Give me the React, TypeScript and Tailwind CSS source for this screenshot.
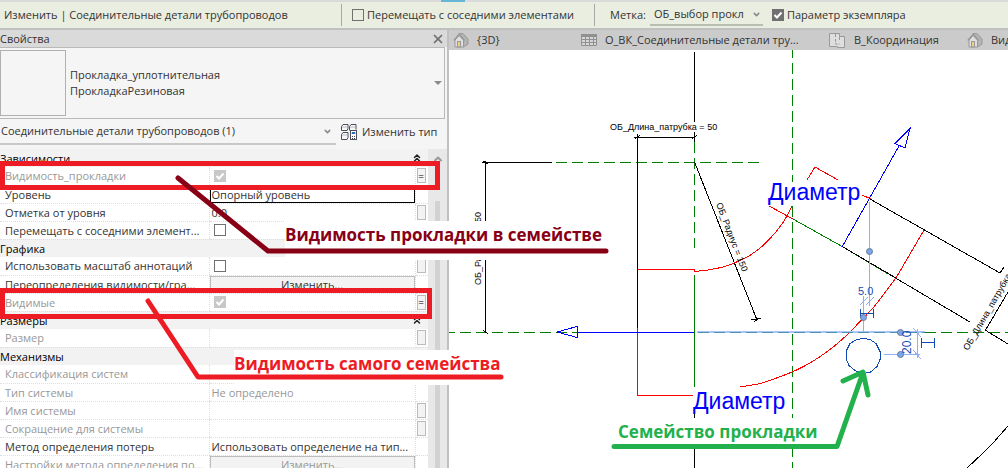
import React from 'react';
import { X, ChevronDown, ChevronUp, ChevronsUp } from 'lucide-react';

interface Row {
  label: string;
  kind?: 'header' | 'check' | 'text' | 'field' | 'button' | 'empty';
  value?: string;
  checked?: boolean;
  muted?: boolean;
  link?: string;
}

const rows: Row[] = [
  { label: 'Зависимости', kind: 'header' },
  { label: 'Видимость_прокладки', kind: 'check', checked: true, muted: true, link: '=' },
  { label: 'Уровень', kind: 'field', value: 'Опорный уровень' },
  { label: 'Отметка от уровня', kind: 'text', value: '0.0', link: '' },
  { label: 'Перемещать с соседними элемент...', kind: 'check', link: '' },
  { label: 'Графика', kind: 'header' },
  { label: 'Использовать масштаб аннотаций', kind: 'check', link: '' },
  { label: 'Переопределения видимости/гра...', kind: 'button', value: 'Изменить...' },
  { label: 'Видимые', kind: 'check', checked: true, muted: true, link: '=' },
  { label: 'Размеры', kind: 'header' },
  { label: 'Размер', kind: 'empty', muted: true, link: '' },
  { label: 'Механизмы', kind: 'header' },
  { label: 'Классификация систем', kind: 'empty', muted: true },
  { label: 'Тип системы', kind: 'text', value: 'Не определено', muted: true },
  { label: 'Имя системы', kind: 'empty', muted: true, link: '' },
  { label: 'Сокращение для системы', kind: 'empty', muted: true, link: '' },
  { label: 'Метод определения потерь', kind: 'text', value: 'Использовать определение на тип...' },
  { label: 'Настройки метода определения по...', kind: 'button', value: 'Изменить...', muted: true },
];

function HomeIcon() {
  return (
    <svg width="16" height="16" viewBox="0 0 16 16" fill="none" className="shrink-0">
      <path d="M6 1.500h4L15 7v5l-4.500 3V7.500z" fill="#b4b4b4" stroke="#999" />
      <path d="M2 8v7h8.500V8L6.200 3.500z" fill="#dedede" stroke="#999" />
      <path d="M.8 8.600 6.200 2.500l5.300 6.100" stroke="#999" strokeWidth="1.500" />
      <rect x="4.500" y="9.500" width="3" height="5.500" fill="#f0cd85" stroke="#999" />
    </svg>
  );
}

function ScheduleIcon() {
  return (
    <svg width="16" height="16" viewBox="0 0 16 16" className="shrink-0">
      <path d="M.5 2.500h15v11H.5z" fill="#d6d6d6" stroke="#909090" />
      <path d="M0 2h16v3H0z" fill="#909090" />
      <path d="M0 7.500h16M0 10.500h16M4.500 5v9M8.500 5v9M12.500 5v9" stroke="#909090" />
    </svg>
  );
}

function SheetIcon() {
  return (
    <svg width="17" height="17" viewBox="0 0 17 17" fill="#dedede" stroke="#999" className="shrink-0">
      <path d="M.5 1.500h10v3h5v11h-7v-1h-8z" />
      <path d="M6.500 2v3M6.500 7v5h4M10.500 5v3" fill="none" strokeDasharray="3 1" />
    </svg>
  );
}

function EditTypeIcon() {
  return (
    <svg width="16" height="16" viewBox="0 0 16 16" fill="none" stroke="#4a4f5a" className="shrink-0">
      <path d="M.5 2.500 2 .5h5v4l-1 2H.5zM8.500 2.500l1.500-2h5v5M8.500 2.500v4M.5 10.500l1.500-2h5v5l-1 2H.5z" fill="#f8f8f8" />
      <path d="M1 3h5M9 3h5M1 11h5" stroke="#b9bcc2" />
      <rect x="9.500" y="6.500" width="6" height="9" fill="#fff" />
      <path d="M11 8.500h3v1h-3z" fill="#2f80d0" stroke="#2f6fb0" />
      <path d="M11 12.500h1m1 0h1M11 14.500h1m1 0h1" />
    </svg>
  );
}

function Check({ id, checked = false, muted = false, label }: { id?: string; checked?: boolean; muted?: boolean; label?: string }) {
  return (
    <span className="inline-grid size-3 shrink-0 place-items-center">
      <input
        id={id}
        type="checkbox"
        aria-label={label}
        defaultChecked={checked}
        disabled={muted}
        className="col-start-1 row-start-1 size-3 appearance-none border border-[#707070] bg-transparent checked:bg-[#707070] disabled:border-[#c8c8c8] disabled:bg-[#c8c8c8]"
      />
      {checked && (
        <svg viewBox="0 0 12 12" className="pointer-events-none z-10 col-start-1 row-start-1 size-3" fill="none" stroke="#fff" strokeWidth="2">
          <path d="M2.500 6 5 8.500 9.500 3.500" />
        </svg>
      )}
    </span>
  );
}

function OptionsBar() {
  return (
    <div className="flex h-[28px] shrink-0 items-center border-b-2 border-[#c0c0c0] bg-[#e9eee1] whitespace-nowrap">
      <span className="w-[341px] shrink-0 pl-1">Изменить | Соединительные детали трубопроводов</span>
      <div className="flex h-[22px] w-[254px] shrink-0 items-center gap-[3px] border-x border-[#a8a8a8] pl-[10px]">
        <Check id="move-near" />
        <label htmlFor="move-near">Перемещать с соседними элементами</label>
      </div>
      <label htmlFor="tag" className="w-[55px] shrink-0 pl-[15px]">Метка:</label>
      <div className="flex w-[113px] shrink-0 items-center border-b-2 border-[#b9beb3]">
        <select id="tag" className="h-5 w-[102px] appearance-none bg-transparent pl-1">
          <option>ОБ_выбор прокл</option>
        </select>
        <ChevronDown className="size-[9px] text-[#888]" strokeWidth={4} />
      </div>
      <div className="flex items-center gap-[3px] pl-[9px]">
        <Check id="instance" checked />
        <label htmlFor="instance">Параметр экземпляра</label>
      </div>
    </div>
  );
}

function ValueCell({ row }: { row: Row }) {
  switch (row.kind) {
    case 'check':
      return <div className="flex pl-1"><Check checked={row.checked} muted={row.muted} label={row.label} /></div>;
    case 'field':
      return <input aria-label={row.label} defaultValue={row.value} className="block h-[17px] w-full border border-black bg-white pl-px" />;
    case 'button':
      return <button type="button" className="block h-4 w-full border border-[#bdbdbd] bg-[#f3f3f3] leading-4">{row.value}</button>;
    default:
      return <div className="pl-[2px] whitespace-nowrap">{row.value}</div>;
  }
}

function PropertiesPanel() {
  return (
    <aside className="flex w-[449px] shrink-0 flex-col border-r-2 border-[#c0c0c0] bg-[#f5f5f5]">
      <div className="flex h-[17px] shrink-0 items-center justify-between bg-[#dadada] pr-[2px]">
        <h2>Свойства</h2>
        <button type="button" aria-label="Закрыть"><X className="size-[14px] text-[#707070]" strokeWidth={3} /></button>
      </div>

      {/* Type selector */}
      <div className="mr-[2px] flex h-[72px] shrink-0 items-center border border-l-0 border-[#b9b9b9]">
        <div className="size-[66px] shrink-0 border border-[#b0b0b0]" />
        <div className="flex-1 pl-1 leading-4">
          <p>Прокладка_уплотнительная</p>
          <p>ПрокладкаРезиновая</p>
        </div>
        <svg width="8" height="4" className="mr-[2px]"><path d="M0 0h8L4 4z" fill="#8a8a8a" /></svg>
      </div>

      <div className="flex h-[30px] shrink-0 items-start">
        <div className="flex h-[26px] w-[336px] items-center border-b-2 border-[#c8c8c8] pl-px">
          <select aria-label="Категория" className="flex-1 appearance-none bg-transparent">
            <option>Соединительные детали трубопроводов (1)</option>
          </select>
          <ChevronDown className="mr-1 size-[9px] text-[#888]" strokeWidth={4} />
        </div>
        <button type="button" className="flex h-[26px] items-center gap-[5px] pl-[5px]">
          <EditTypeIcon />
          Изменить тип
        </button>
      </div>

      <div className="flex min-h-0 flex-1 overflow-hidden">
        <table className="h-[324px] w-[428px] shrink-0 table-fixed border-collapse bg-white leading-[17px]">
          <colgroup>
            <col className="w-[209px]" />
            <col className="w-[206px]" />
            <col className="w-[13px]" />
          </colgroup>
          <tbody>
            {rows.map((row) =>
              row.kind === 'header' ? (
                <tr key={row.label} className="h-[18px] bg-[#f2f2f2]">
                  <th colSpan={2} className="p-0 text-left font-normal text-black">{row.label}</th>
                  <td className="p-0"><ChevronsUp className="-ml-1 size-3 text-[#222]" strokeWidth={3} /></td>
                </tr>
              ) : (
                <tr key={row.label} className={row.muted ? 'h-[18px] text-[#989898]' : 'h-[18px]'}>
                  <th className="border-b border-dotted border-[#dedede] py-0 pr-0 pl-[5px] text-left font-normal whitespace-nowrap">
                    {row.label}
                  </th>
                  <td className="border-x border-b border-dotted border-[#dedede] p-0">
                    <ValueCell row={row} />
                  </td>
                  <td className="border-b border-dotted border-[#dedede] p-0 pl-px">
                    {row.link !== undefined && (
                      <button type="button" aria-label="Связать параметр" className="block h-[15px] w-[9px] border border-[#bbb] bg-[#f3f3f3] text-[10px] leading-3 text-black">
                        {row.link}
                      </button>
                    )}
                  </td>
                </tr>
              ),
            )}
          </tbody>
        </table>
        <div className="flex flex-1 flex-col items-center bg-[#e8e8e8]">
          <ChevronUp className="mt-1 size-3 text-[#999]" strokeWidth={4} />
          <div className="mt-9 w-[5px] flex-1 bg-[#d2d2d2]" />
        </div>
      </div>
    </aside>
  );
}

function ViewTabs() {
  return (
    <nav className="flex h-5 shrink-0 items-center overflow-hidden bg-[#cbcbcb] whitespace-nowrap">
      <a href="#3d" className="flex w-[128px] shrink-0 items-center gap-2 pl-1"><HomeIcon />{'{3D}'}</a>
      <a href="#schedule" className="flex w-[248px] shrink-0 items-center gap-2 pl-1"><ScheduleIcon />О_ВК_Соединительные детали тру...</a>
      <a href="#coord" className="flex w-[138px] shrink-0 items-center gap-2 pl-1"><SheetIcon />В_Координация</a>
      <a href="#view" className="flex shrink-0 items-center gap-2 pl-1"><HomeIcon />Вид</a>
    </nav>
  );
}

function Drawing() {
  return (
    <svg width="559" height="418" viewBox="449 50 559 418" fill="none" shapeRendering="crispEdges" className="shrink-0" fontFamily='"Liberation Sans", Arial, sans-serif'>
      {/* Reference planes */}
      <g stroke="#008000" strokeDasharray="11 5">
        <path d="M792.500 47v135M792.500 206v262" />
        <path d="M556 162.500h204" />
        <path d="M694.500 142v106" />
        <path d="M444 332.500h133M925 332.500h83" />
      </g>
      <path d="M694.500 275v112" stroke="#008000" />

      {/* Dimensions */}
      <g stroke="#000">
        <path d="M694.500 52v70M694.500 132v10M694.500 413v55" />
        <path d="M637.500 134v194M634 137.500h60M635 139l5-4M692 139l5-4" />
        <path d="M482 162.500h70M485.500 161v171M483 161l5 3M483 330l5 4" />
        <path d="M694.500 162 757 320M751 320l10-2M754 322l5-4" />
        <path d="M843 247l127 75M870 199l130 74" />
        <path d="M1000 273l4-6M985 331l23-39M985 330l23 14" />
        <path d="M967 468l16-15 10-10 15-17" />
      </g>

      {/* Pipe contour */}
      <g stroke="#f00">
        <path d="M638 269.500h56.500V272" />
        <path d="M637.500 328v67h55" />
        <path d="M695 271.500q14-1 26-4 12-3 27-11 12-7 20-16 12-12 18-23l6-11" />
        <path d="M769 206l24 13M807 180l8-13 23 13M862 195l9 4" />
        <path d="M924 230l-28 48-22 29-24 25q-15 15-32 26-14 9-26 14-22 9-34 12l-18 3" />
      </g>
      <path d="M793 219l50 28 45 27" stroke="#008000" />
      <path d="M843 247l53 31" stroke="#000" />

      {/* Connectors */}
      <g stroke="#00f">
        <path d="M577 332.500h117M557 332l20-5.500v11z" />
        <path d="M842 247l57-101M910 128.500l-15 15 10 4.500z" />
      </g>
      <g fill="#00f" fontSize="23">
        <text x="768" y="200">Диаметр</text>
        <text x="693" y="409">Диаметр</text>
      </g>

      <g fill="#000" fontSize="9">
        <text x="610" y="130">ОБ_Длина_патрубка = 50</text>
        <text transform="translate(481 285) rotate(-90)">ОБ_Радиус = 150</text>
        <text transform="translate(716 204) rotate(69)">ОБ_Радиус = 150</text>
        <text transform="translate(968 351) rotate(-60)">ОБ_Длина_патрубка = 50</text>
      </g>

      {/* Temporary dimensions of the selected gasket */}
      <g stroke="#8db0f5">
        <path d="M697 332h228" strokeWidth="2" stroke="#a9c5fa" />
        <path d="M869.500 202v104M863.500 296v37M884 354.500h36M917.500 329v29M860 305l8-8M866 305l8-8M913 328l8 9M913 350l8 9" />
      </g>
      <path d="M698 332.500h227" stroke="#4e92a8" strokeDasharray="11 5" />
      <g stroke="#0f4bb0">
        <path d="M860.500 309v9M873.500 309v9M861 313.500h12M921.500 338v10M934.500 338v10M922 342.500h12" />
        <path d="M857 339.500l6-1 7 1 6 4 4 8v8l-3 7-7 6-7 1-8-3-6-5-3-7v-7l4-8z" />
      </g>
      <g fill="#7ba5ec" stroke="#6b7d98" shapeRendering="auto">
        <circle cx="869.500" cy="251.500" r="3" />
        <circle cx="863.500" cy="317.500" r="3" />
        <circle cx="900.500" cy="332.500" r="3" />
        <circle cx="900.500" cy="354.500" r="3" />
      </g>
      <g fill="#1c4db0">
        <text x="858" y="295" fontSize="11">5.0</text>
        <text transform="translate(911 354) rotate(-90)" fontSize="12">20.0</text>
      </g>
    </svg>
  );
}

/* Marker strokes and captions drawn over both the panel and the drawing */
function Annotations() {
  return (
    <svg
      width="1008"
      height="468"
      viewBox="0 0 1008 468"
      fill="none"
      strokeWidth="5"
      strokeLinecap="round"
      strokeLinejoin="round"
      className="pointer-events-none absolute top-0 left-0"
      fontFamily='"Open Sans", "Noto Sans", sans-serif'
      fontWeight="700"
      fontSize="17"
    >
      <path d="M285 221h324v39H285zM234 350h270v35H234zM616 418h225v31H616z" fill="#fff" stroke="none" />
      <g stroke="#ed1c24" strokeLinejoin="miter">
        <path d="M2.500 163.500h435v24H2.500z" />
        <path d="M2.500 290.500h427v26H2.500z" />
      </g>
      <path d="M178 178l90 73h338" stroke="#880015" />
      <path d="M148 301l50 76h303" stroke="#ed1c24" />
      <path d="M614 446.500h223l26-74M843 381l20-9 5 23" stroke="#22b14c" />
      <text x="285" y="241" fill="#880015">Видимость прокладки в семействе</text>
      <text x="234" y="370" fill="#ed1c24">Видимость самого семейства</text>
      <text x="618" y="438" fill="#22b14c">Семейство прокладки</text>
    </svg>
  );
}

export default function App() {
  return (
    <div className="relative flex h-screen flex-col overflow-hidden bg-white font-['Open_Sans','Noto_Sans',sans-serif] text-[11px] leading-4 text-[#333]">
      <div className="flex h-[2px] shrink-0 bg-[#dadada] pl-[441px]">
        <div className="w-6 bg-[#69b5d8]" />
      </div>
      <OptionsBar />
      <div className="flex min-h-0 flex-1">
        <PropertiesPanel />
        <main className="flex min-w-0 flex-1 flex-col overflow-hidden">
          <ViewTabs />
          <Drawing />
        </main>
      </div>
      <Annotations />
    </div>
  );
}
